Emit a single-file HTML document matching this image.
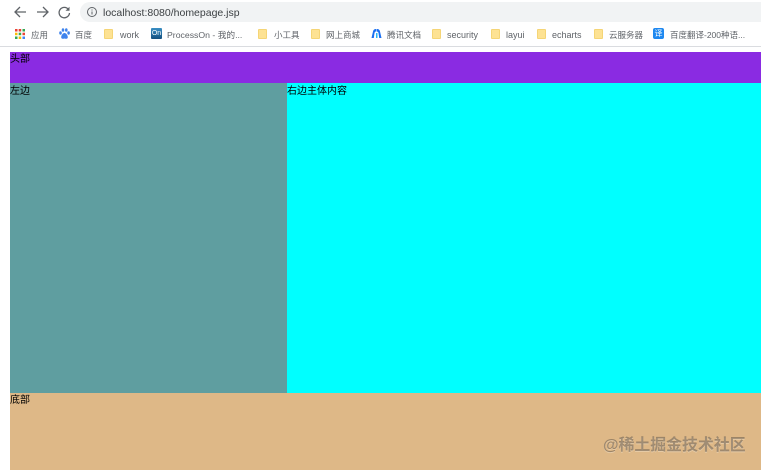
<!DOCTYPE html>
<html lang="zh">
<head>
<meta charset="utf-8">
<title>homepage</title>
<style>
html,body{margin:0;padding:0;width:761px;height:470px;overflow:hidden;background:#fff}
body{position:relative;font-family:"Liberation Sans","Noto Sans CJK SC",sans-serif}
div,svg,span{position:absolute}
.b{top:28.500px;font-size:9px;line-height:12px;color:#5f6368;white-space:nowrap;filter:blur(.25px)}
.c{font-size:8.500px}
.f{top:29px;width:9px;height:10px;background:#fde293;border:1px solid #f5d576;box-sizing:border-box;border-radius:1px}
.t{font-size:10px;line-height:13px;color:#000;white-space:nowrap;left:0;filter:blur(.25px)}
</style>
</head>
<body>
<svg style="left:0;top:0" width="80" height="24" viewBox="0 0 80 24" fill="none" stroke="#5f6368" stroke-width="1.300">
<path d="M26 12H15.500M20 7l-5 5 5 5"/>
<path d="M37 12h10.500M43 7l5 5-5 5"/>
<path d="M68.500 9.500A5.200 5.200 0 1 0 69.500 13"/>
<path d="M69.500 6.800v4h-4" fill="#5f6368" stroke="none"/>
</svg>
<div style="left:80px;top:2px;width:681px;height:20px;background:#f1f3f4;border-radius:10px 0 0 10px"></div>
<svg style="left:86px;top:6px" width="12" height="12" viewBox="0 0 12 12" fill="none">
<circle cx="6" cy="6" r="4.500" stroke="#5f6368" stroke-width="1"/>
<path d="M6 5.500v3M6 3.500v1" stroke="#5f6368" stroke-width="1"/>
</svg>
<div style="left:103px;top:6px;font-size:10.500px;line-height:14px;color:#3c4043;white-space:nowrap;filter:blur(.25px)">localhost:8080/homepage.jsp</div>

<svg style="left:15px;top:29px" width="10" height="10" viewBox="0 0 10 10">
<g fill="#ea4335"><rect x="0" y="0" width="2.500" height="2.500"/><rect x="3.700" y="0" width="2.500" height="2.500"/></g><rect x="7.500" y="0" width="2.500" height="2.500" fill="#34a853"/>
<rect x="0" y="3.700" width="2.500" height="2.500" fill="#fbbc04"/><rect x="3.700" y="3.700" width="2.500" height="2.500" fill="#34a853"/><rect x="7.500" y="3.700" width="2.500" height="2.500" fill="#ea4335"/>
<rect x="0" y="7.500" width="2.500" height="2.500" fill="#34a853"/><rect x="3.700" y="7.500" width="2.500" height="2.500" fill="#fbbc04"/><rect x="7.500" y="7.500" width="2.500" height="2.500" fill="#4285f4"/>
</svg>
<span class="b c" style="left:31px">应用</span>

<svg style="left:59px;top:28px" width="11" height="12" viewBox="0 0 11 12" fill="#3f83ec">
<ellipse cx="1.500" cy="5" rx="1.300" ry="1.700"/><ellipse cx="4" cy="2" rx="1.300" ry="1.800"/><ellipse cx="7.300" cy="2" rx="1.300" ry="1.800"/><ellipse cx="9.600" cy="5" rx="1.300" ry="1.700"/>
<path d="M5.500 5C3.500 5 2 8 2.200 9.500 2.500 11 4 11 5.500 10.500 7 11 8.500 11 8.800 9.500 9 8 7.500 5 5.500 5z"/>
</svg>
<span class="b c" style="left:75px">百度</span>

<div class="f" style="left:104px"></div>
<span class="b" style="left:120px">work</span>

<div style="left:151px;top:28px;width:11px;height:11px;background:linear-gradient(#3a8fc4,#14507f);border-radius:1px;color:#fff;font-size:7px;line-height:11px;text-align:center">On</div>
<span class="b" style="left:167px;font-size:8.700px">ProcessOn - 我的...</span>

<div class="f" style="left:258px"></div>
<span class="b c" style="left:274px">小工具</span>

<div class="f" style="left:311px"></div>
<span class="b c" style="left:326px">网上商城</span>

<svg style="left:371px;top:28px" width="11" height="11" viewBox="0 0 11 11">
<path d="M0.500 10L2 3.500Q2.500 1 5 1L5.500 1 5 3.500Q3.800 3.500 3.500 5L2.800 10z" fill="#1a6ff0"/>
<path d="M10.500 10L9 3.500Q8.500 1 6 1L5.500 3.500Q7.200 3.500 7.500 5L8.200 10z" fill="#1a6ff0"/>
<path d="M5 5h1.500v5H5z" fill="#29b6f6"/>
</svg>
<span class="b c" style="left:387px">腾讯文档</span>

<div class="f" style="left:432px"></div>
<span class="b" style="left:447px">security</span>

<div class="f" style="left:491px"></div>
<span class="b" style="left:506px">layui</span>

<div class="f" style="left:537px"></div>
<span class="b" style="left:552px">echarts</span>

<div class="f" style="left:594px"></div>
<span class="b c" style="left:609px">云服务器</span>

<div style="left:653px;top:28px;width:11px;height:11px;background:#1e88f0;border-radius:2px;color:#fff;font-size:8px;line-height:11px;text-align:center">译</div>
<span class="b c" style="left:670px">百度翻译-200种语...</span>

<div style="left:0;top:46px;width:761px;height:1px;background:#dadce0"></div>

<div style="left:10px;top:52px;width:751px;height:31px;background:#8a2be2"><span class="t" style="top:1px">头部</span></div>
<div style="left:10px;top:83px;width:277px;height:310px;background:#5f9ea0"><span class="t" style="top:2px">左边</span></div>
<div style="left:287px;top:83px;width:474px;height:310px;background:#00ffff"><span class="t" style="top:2px">右边主体内容</span></div>
<div style="left:10px;top:393px;width:751px;height:77px;background:#deb887"><span class="t" style="top:1px">底部</span></div>

<div style="left:603px;top:436px;font-size:15.900px;line-height:20px;font-weight:bold;color:rgba(90,80,70,.5);text-shadow:0 1px 0 rgba(255,255,255,.25);white-space:nowrap">@稀土掘金技术社区</div>
</body>
</html>
